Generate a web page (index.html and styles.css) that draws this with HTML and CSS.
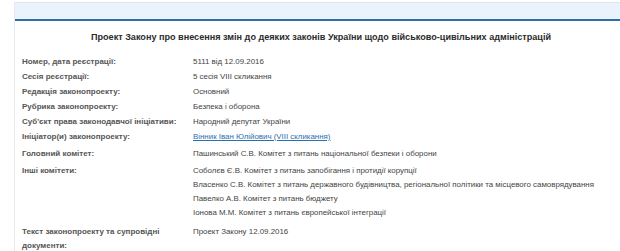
FILE: index.html
```html
<!DOCTYPE html>
<html lang="uk">
<head>
<meta charset="utf-8">
<title>Картка законопроекту</title>
<link rel="stylesheet" href="styles.css">
</head>
<body>
<div class="page">
  <div class="topbar"></div>
  <div class="card">
    <h1 class="title">Проект Закону про внесення змін до деяких законів України щодо військово-цивільних адміністрацій</h1>
    <div class="info">
      <div class="label">Номер, дата реєстрації:</div>
      <div class="value">5111 від 12.09.2016</div>

      <div class="label">Сесія реєстрації:</div>
      <div class="value">5 сесія VIII скликання</div>

      <div class="label">Редакція законопроекту:</div>
      <div class="value">Основний</div>

      <div class="label">Рубрика законопроекту:</div>
      <div class="value">Безпека і оборона</div>

      <div class="label">Суб'єкт права законодавчої ініціативи:</div>
      <div class="value">Народний депутат України</div>

      <div class="label">Ініціатор(и) законопроекту:</div>
      <div class="value"><a class="link" href="#">Вінник Іван Юлійович (VIII скликання)</a></div>

      <div class="label gap">Головний комітет:</div>
      <div class="value gap">Пашинський С.В. Комітет з питань національної безпеки і оборони</div>

      <div class="label gap">Інші комітети:</div>
      <div class="value gap lines">
        <span>Соболєв Є.В. Комітет з питань запобігання і протидії корупції</span>
        <span>Власенко С.В. Комітет з питань державного будівництва, регіональної політики та місцевого самоврядування</span>
        <span>Павелко А.В. Комітет з питань бюджету</span>
        <span>Іонова М.М. Комітет з питань європейської інтеграції</span>
      </div>

      <div class="label gap-lg">Текст законопроекту та супровідні документи:</div>
      <div class="value gap-lg">Проект Закону 12.09.2016</div>
    </div>
  </div>
  <div class="bottombar"></div>
</div>
</body>
</html>
```

FILE: styles.css
```css
html, body {
  margin: 0;
  padding: 0;
  background: #ffffff;
}

body {
  font-family: "Liberation Sans", Arial, sans-serif;
  color: #3a3a3a;
}

.page {
  margin-left: 14px;
  border-left: 1px solid #e6eaee;
  min-height: 251px;
}

.topbar {
  margin-top: 2px;
  height: 16px;
  background: #eaf2fb;
  border-top: 1px solid #dbe6f1;
  border-bottom: 2px solid #2f6fa6;
}

.card {
  padding: 0 0 0 7px;
}

.title {
  margin: 11px 0 12px;
  font-size: 9.1px;
  line-height: 11px;
  font-weight: bold;
  color: #2b2b2b;
  text-align: center;
}

.info {
  display: grid;
  grid-template-columns: 171px 1fr;
  row-gap: 1px;
  font-size: 8px;
  line-height: 14px;
}

.label {
  font-weight: bold;
  color: #555555;
  padding-right: 11px;
}

.value {
  color: #444444;
  font-size: 7.9px;
}

.gap {
  margin-top: 2px;
}

.gap-lg {
  margin-top: 4px;
  line-height: 14px;
}

.lines {
  display: flex;
  flex-direction: column;
}

.link {
  color: #2a6fb0;
  text-decoration: underline;
}

.bottombar {
  margin: 0 0 0 6px;
  height: 6px;
  background: #eaf2f8;
  border-top: 1px solid #d9e6ee;
}
```
